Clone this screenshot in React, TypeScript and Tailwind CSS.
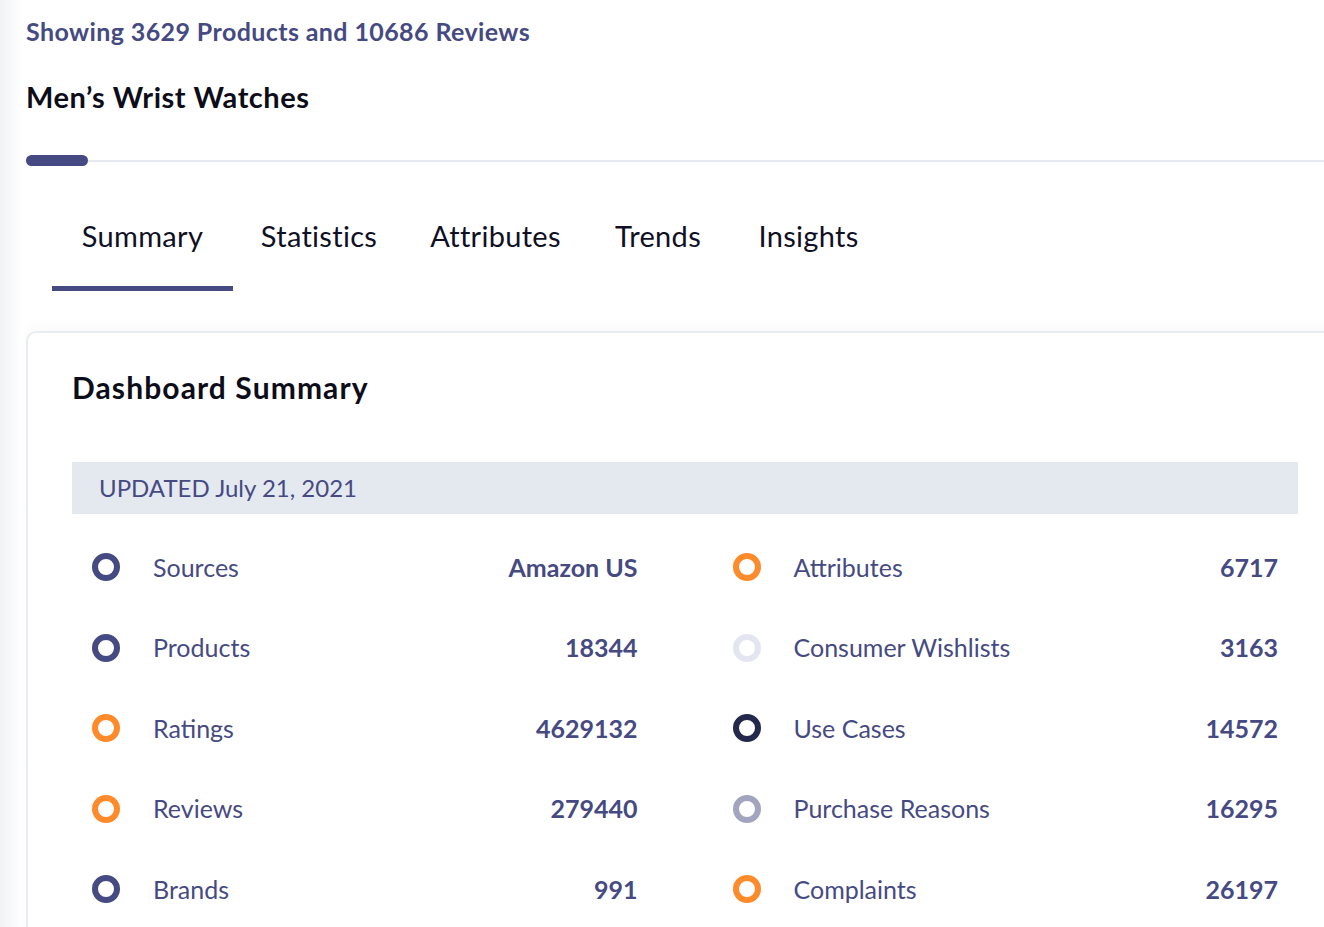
import React from "react";

type Row = { label: string; value: string; color: string };

const left: Row[] = [
  { label: "Sources", value: "Amazon US", color: "border-[#464a82]" },
  { label: "Products", value: "18344", color: "border-[#464a82]" },
  { label: "Ratings", value: "4629132", color: "border-[#fd8a2b]" },
  { label: "Reviews", value: "279440", color: "border-[#fd8a2b]" },
  { label: "Brands", value: "991", color: "border-[#464a82]" },
];

const right: Row[] = [
  { label: "Attributes", value: "6717", color: "border-[#fd8a2b]" },
  { label: "Consumer Wishlists", value: "3163", color: "border-[#e3e6f0]" },
  { label: "Use Cases", value: "14572", color: "border-[#25284d]" },
  { label: "Purchase Reasons", value: "16295", color: "border-[#a3a4bf]" },
  { label: "Complaints", value: "26197", color: "border-[#fd8a2b]" },
];

function StatRow({ r }: { r: Row }) {
  return (
    <div className="flex h-[80.5px] items-center">
      <div className={`h-[28px] w-[28px] shrink-0 rounded-full border-[6px] ${r.color}`} />
      <div className="ml-[33px] flex-1 text-[25px] text-[#464a82]">{r.label}</div>
      <div className="text-[25px] font-bold text-[#464a82]">{r.value}</div>
    </div>
  );
}

const tabs: { label: string; w: string }[] = [
  { label: "Summary", w: "w-[181px]" },
  { label: "Statistics", w: "w-[172px]" },
  { label: "Attributes", w: "w-[181px]" },
  { label: "Trends", w: "w-[144px]" },
  { label: "Insights", w: "w-[157px]" },
];

export default function App() {
  return (
    <div
      className="flex min-h-[927px] w-[1324px] overflow-hidden bg-white"
      style={{ fontFamily: "Lato, 'Noto Sans', sans-serif" }}
    >
      <div className="w-[22px] shrink-0 bg-gradient-to-r from-[#f2f3f6] to-white" />
      <div className="flex min-w-0 flex-1 flex-col pl-[4px]">
        <p className="mt-[13px] text-[25px] font-bold leading-[36px] tracking-[0.4px] text-[#464a82]">
          Showing 3629 Products and 10686 Reviews
        </p>
        <h1 className="mt-[30px] text-[29px] font-bold leading-[36px] tracking-[0.5px] text-[#0d0d1a]">
          Men’s Wrist Watches
        </h1>
        <div className="mt-[40px] flex items-center">
          <div className="h-[11px] w-[62px] rounded-full bg-[#464a82]" />
          <div className="h-[2px] flex-1 bg-[#e6e9f0]" />
        </div>
        <div className="ml-[26px] mt-[52px] flex">
          {tabs.map((t, i) => (
            <div key={t.label} className={`flex shrink-0 flex-col items-stretch ${t.w}`}>
              <div className="text-center text-[29px] leading-[36px] tracking-[0.3px] text-[#101024]">{t.label}</div>
              <div className={`mt-[32px] h-[5px] ${i === 0 ? "bg-[#464a82]" : "bg-transparent"}`} />
            </div>
          ))}
        </div>
        <div className="mr-[-20px] mt-[40px] rounded-tl-[10px] border-2 border-[#e8ebf1] px-[44px] pb-[20px] pt-[36px] shadow-[0_-6px_12px_rgba(0,0,0,0.025)]">
          <h2 className="text-[30px] font-bold leading-[36px] tracking-[1.1px] text-[#0d0d1a]">Dashboard Summary</h2>
          <div className="mt-[57px] flex h-[52px] items-center bg-[#e4e8ef] pl-[27px] text-[24px] text-[#464a82]">
            UPDATED July 21, 2021
          </div>
          <div className="mt-[13px] grid grid-cols-2 gap-x-[95px] px-[20px]">
            <div className="flex flex-col">
              {left.map((r) => (
                <StatRow key={r.label} r={r} />
              ))}
            </div>
            <div className="flex flex-col">
              {right.map((r) => (
                <StatRow key={r.label} r={r} />
              ))}
            </div>
          </div>
        </div>
      </div>
    </div>
  );
}
